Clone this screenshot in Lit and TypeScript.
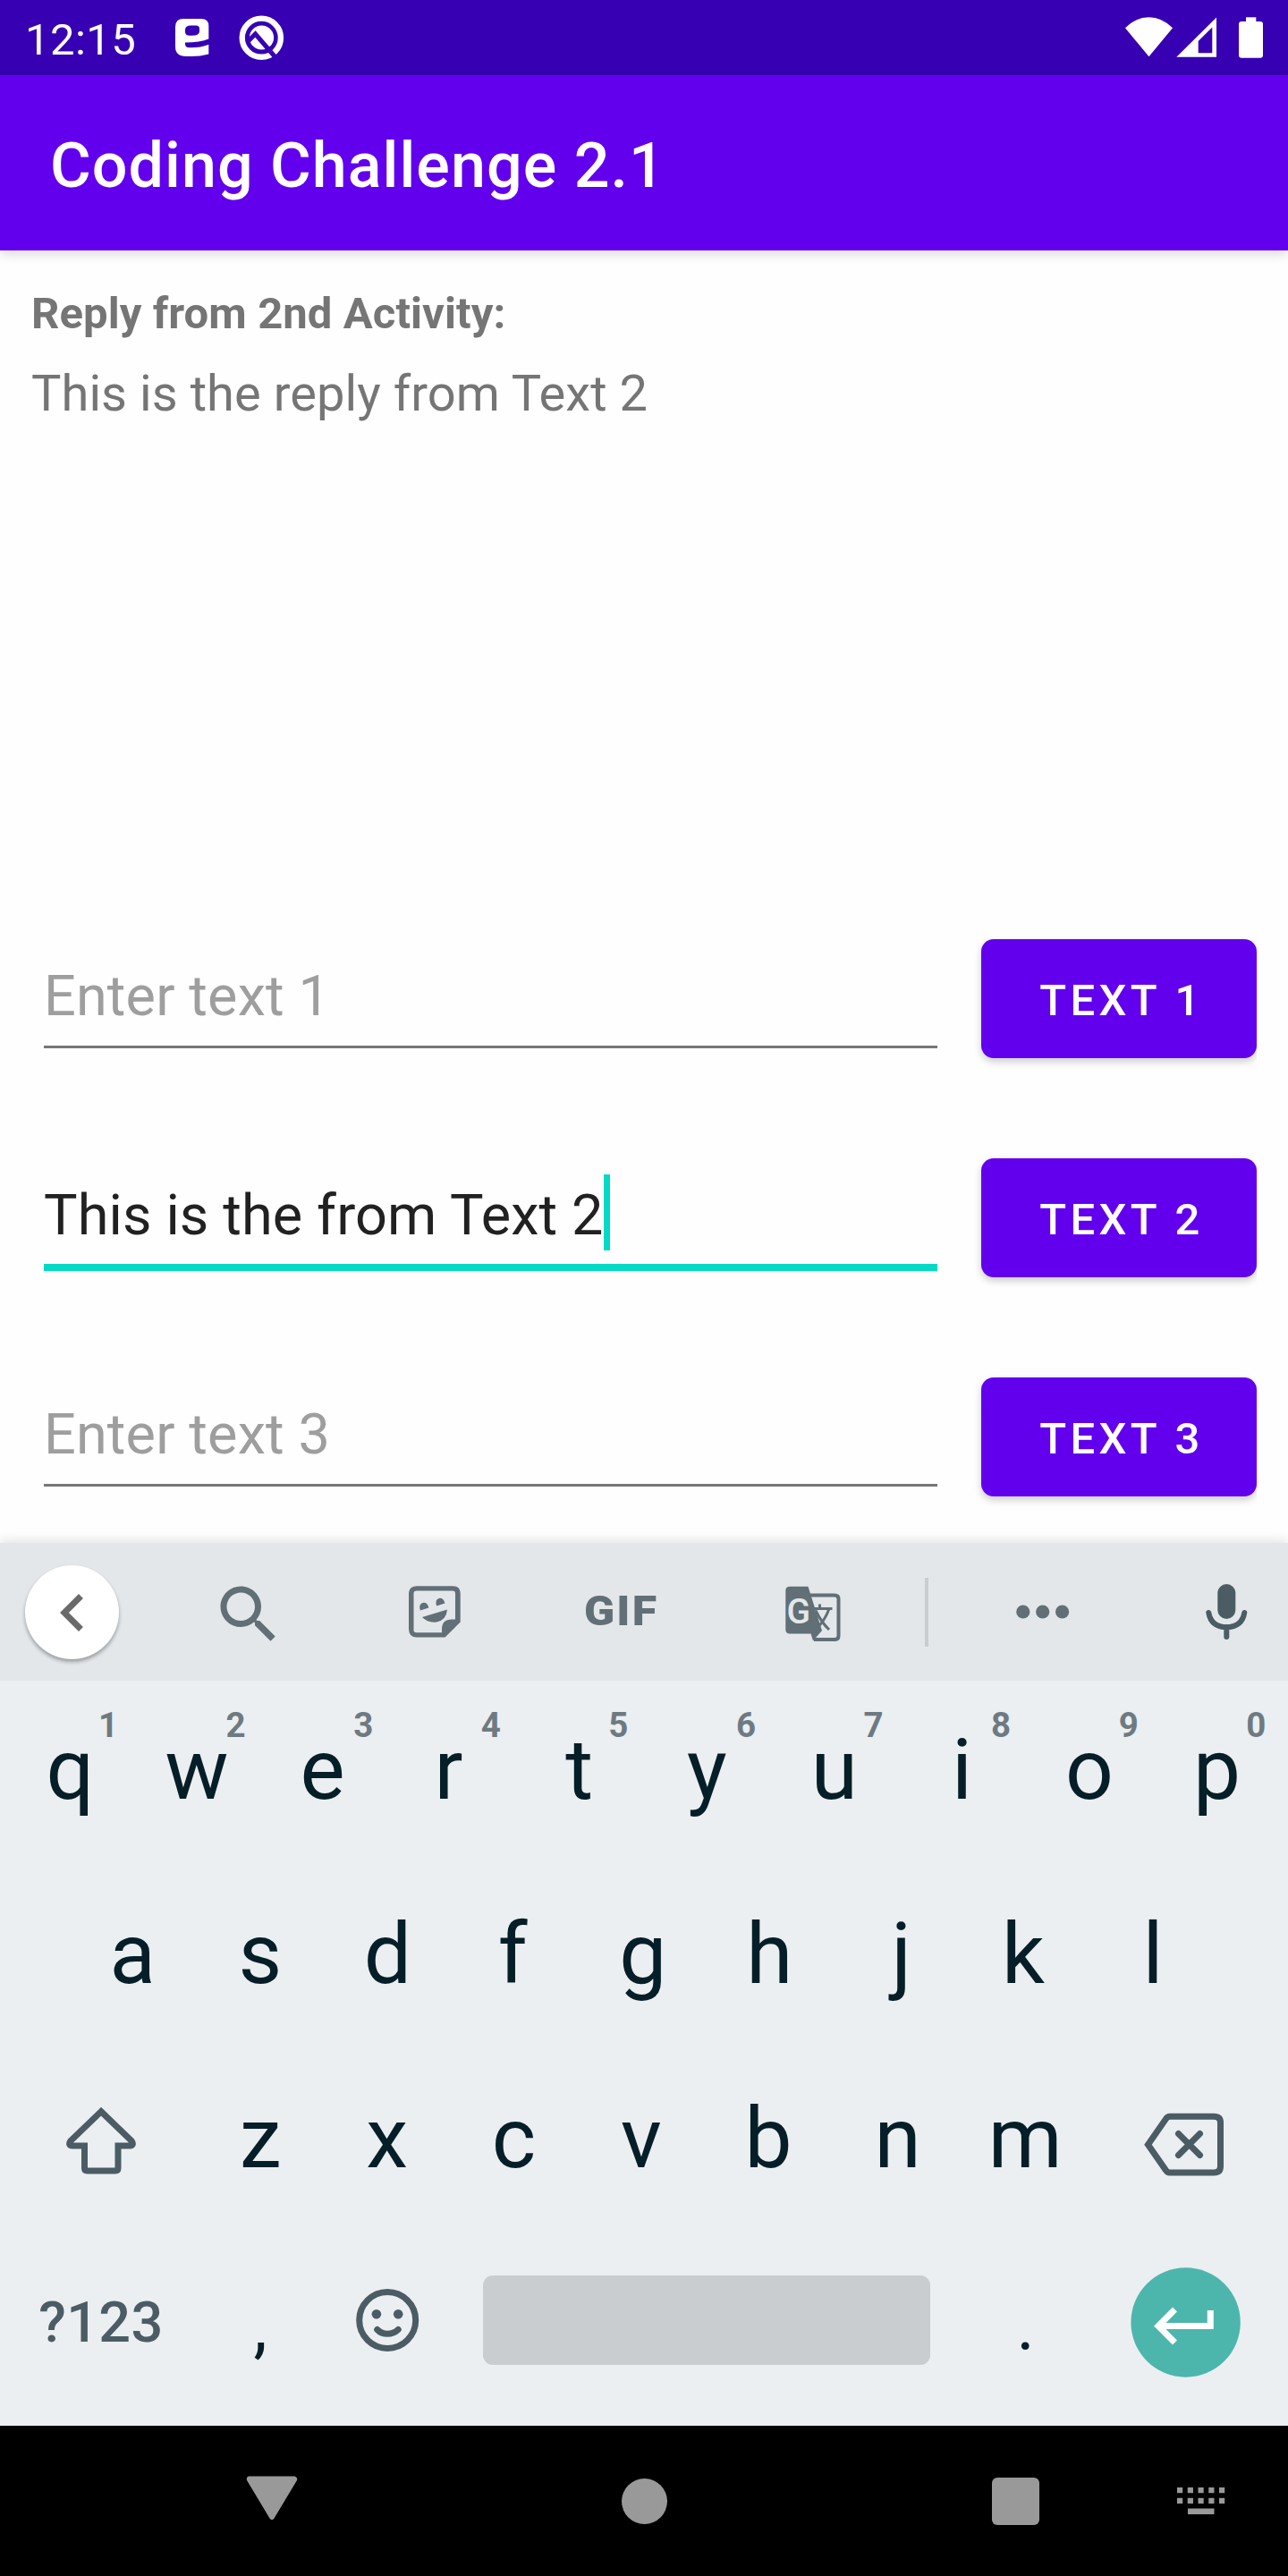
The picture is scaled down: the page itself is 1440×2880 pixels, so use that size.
import { LitElement, html, svg, css } from "lit";
import { customElement, property } from "lit/decorators.js";

@customElement("status-bar")
class StatusBar extends LitElement {
  static styles = css`
    :host { display: flex; height: 84px; background: #3700b3; color: #fff; padding-left: 28px; box-sizing: border-box; }
    svg { display: block; flex: none; }
    .time { width: 160px; font-size: 49px; line-height: 89px; white-space: nowrap; letter-spacing: 0.45px; }
    .notif { width: 140px; height: 84px; }
    .system { width: 190px; height: 84px; margin-left: auto; }
  `;
  render() {
    return html`
      <span class="time">12:15</span>
      <svg class="notif" viewBox="188 0 140 84">
        <path fill="#fff" fill-rule="evenodd" d="M205 21H225Q233.300 21 233.300 29V43.500Q224 47.500 207 47.500V49.500Q207 53.200 212 53.200Q225 53.200 233.300 49.700V60.500Q224 63 214 63H208Q196 63 196 52V30Q196 21 205 21ZM213.500 28.500Q207 28.500 207 33.500V35.500Q207 39.700 212 39.700H215Q223 39.700 223 35V32Q223 28.500 219 28.500Z"/>
        <circle cx="292.300" cy="42.200" r="21.600" fill="none" stroke="#fff" stroke-width="6.400"/>
        <circle cx="292.500" cy="42" r="13.600" fill="#fff"/>
        <path d="M276 47.500L285.500 38L310 66.500" fill="none" stroke="#3700b3" stroke-width="5"/>
      </svg>
      <svg class="system" viewBox="1250 0 190 84" fill="#fff">
        <path d="M1284.500 63.300L1258 31.300Q1270 19.300 1284.500 19.300T1311 31.300Z"/>
        <path fill-rule="evenodd" d="M1315.300 63.700L1360 19.500V63.700ZM1339.700 46V59.300H1355.300V30.500Z"/>
        <rect x="1385" y="24" width="27" height="40.700" rx="3"/>
        <rect x="1393" y="19.300" width="11.300" height="6"/>
      </svg>
    `;
  }
}

@customElement("entry-row")
class EntryRow extends LitElement {
  @property() hint = "";
  @property() value = "";
  @property() label = "";
  @property({ type: Boolean }) active = false;

  static styles = css`
    :host { display: flex; height: 133px; justify-content: space-between; }
    .field { width: 999px; height: 122px; box-sizing: border-box; border-bottom: 3.5px solid #777; display: flex; font-size: 63px; line-height: 127px; color: #9e9e9e; white-space: nowrap; letter-spacing: 0.13px; }
    .field.active { height: 126px; border-bottom: 8px solid #03dac5; color: #212121; }
    .caret { width: 7px; height: 85px; margin-top: 18px; background: #03dac5; }
    .button { width: 308px; height: 133px; box-sizing: border-box; padding: 0 0 0 6px; border: 0; border-radius: 14px; background: #6200ee; color: #fff; font: 500 49px/137px Roboto, sans-serif; letter-spacing: 4.37px; text-align: center; box-shadow: 0 4px 8px rgba(0, 0, 0, 0.2); clip-path: inset(-20px 0 -20px -20px); white-space: nowrap; }
  `;
  render() {
    return html`
      <div class="field ${this.active ? "active" : ""}">
        <span>${this.value || this.hint}</span>${this.active ? html`<span class="caret"></span>` : ""}
      </div>
      <div class="button" role="button">${this.label}</div>
    `;
  }
}

@customElement("suggestion-bar")
class SuggestionBar extends LitElement {
  static styles = css`
    :host { display: flex; align-items: center; height: 154px; background: #e3e7ea; color: #616f76; box-sizing: border-box; padding-left: 28px; }
    svg { display: block; flex: none; fill: currentColor; }
    .back { width: 105px; height: 105px; border-radius: 50%; background: #fff; box-shadow: 0 3px 4px rgba(0, 0, 0, 0.32); color: #6a6a6a; }
    .search { width: 84px; height: 84px; margin: 5px 0 0 103px; }
    .sticker { width: 60px; height: 60px; margin-left: 136px; }
    .gif { width: 92px; margin: 0 0 2px 137px; font-size: 46px; line-height: 60px; font-weight: 900; letter-spacing: 2px; transform: scaleX(1.09); transform-origin: left; }
    .translate { width: 64px; height: 64px; margin: 4px 0 0 132px; }
    .divider { width: 4px; height: 77px; margin-left: 93px; background: #c9cdd0; }
    .more { width: 60px; height: 16px; margin-left: 98px; }
    .mic { width: 50px; height: 66px; margin-left: 150px; color: #4b5c64; }
    .glyph { font: 500 39px "Roboto", sans-serif; fill: #e3e7ea; }
  `;
  render() {
    return html`
      <svg class="back" viewBox="-3.150 -3.150 30 30"><path d="M15.410 7.410L14 6l-6 6 6 6 1.410-1.410L10.830 12z"/></svg>
      <svg class="search" viewBox="0 0 24 24"><path d="M15.500 14h-.790l-.280-.270C15.410 12.590 16 11.110 16 9.500 16 5.910 13.090 3 9.500 3S3 5.910 3 9.500 5.910 16 9.500 16c1.610 0 3.090-.590 4.230-1.570l.270.280v.790l5 4.990L20.490 19l-4.990-5zm-6 0C7.010 14 5 11.990 5 9.500S7.010 5 9.500 5 14 7.010 14 9.500 11.990 14 9.500 14z"/></svg>
      <svg class="sticker" viewBox="456 1771.500 60 60">
        <path fill-rule="evenodd" d="M466 1772.700H506Q514.700 1772.700 514.700 1781.500V1813L497.500 1830H466Q457 1830 457 1821V1781.500Q457 1772.700 466 1772.700ZM465.500 1778Q462.500 1778 462.500 1781V1822Q462.500 1824.700 465.500 1824.700H494V1821Q494 1810 505 1810H509V1781Q509 1778 506 1778Z"/>
        <path d="M469.800 1800Q467.500 1792.500 473.500 1791.300Q478 1791 479.300 1797ZM488 1795Q485.800 1787.500 491.500 1786.300Q496 1786 497.400 1792ZM472 1807.500L500 1799Q499 1811 488 1813Q478 1814 472 1807.500Z"/>
      </svg>
      <span class="gif">GIF</span>
      <svg class="translate" viewBox="878 1771.500 64 64">
        <path d="M906 1783H934Q938.500 1783 938.500 1787V1828.500Q938.500 1832.500 934 1832.500H911" fill="none" stroke="currentColor" stroke-width="4"/>
        <path d="M884 1773.300H904.500L920 1822.500L910 1834L907.500 1826H884Q879.300 1826 879.300 1821V1778Q879.300 1773.300 884 1773.300Z"/>
        <text class="glyph" x="880.500" y="1814.500">G</text>
        <path fill="#e3e7ea" d="M912.500 1800L918.500 1813L925 1800Z"/>
        <path d="M908 1798H931.500M917.500 1793V1798M928 1798Q923.500 1811 914 1820M913 1800Q919 1813 928 1821.500" fill="none" stroke="currentColor" stroke-width="3"/>
      </svg>
      <span class="divider"></span>
      <svg class="more" viewBox="1136 0 60 16"><circle cx="1143.800" cy="8" r="7.600"/><circle cx="1165.700" cy="8" r="7.600"/><circle cx="1187.600" cy="8" r="7.600"/></svg>
      <svg class="mic" viewBox="1346 1768 50 66">
        <rect x="1361.300" y="1770" width="20" height="39" rx="10"/>
        <path d="M1351.300 1802Q1354 1818 1371.300 1818.300Q1388.500 1818 1391.300 1802M1371.300 1818V1829" fill="none" stroke="currentColor" stroke-width="6" stroke-linecap="round"/>
      </svg>
    `;
  }
}

// Optical shift of single letters inside their key, in pixels.
const OPTICAL: Record<string, number> = { q: 1, e: -2, r: -3.5, f: -3, j: 4, k: -2.5, h: -1, x: -1, c: -2, v: -2, b: -2.5, n: -0.5, m: -0.5 };

@customElement("soft-keyboard")
class SoftKeyboard extends LitElement {
  static styles = css`
    :host { display: block; height: 987px; background: #ebeff2; color: #051e27; box-shadow: 0 -2px 12px rgba(0, 0, 0, 0.12); }
    .row { display: flex; height: 206px; padding-left: 6px; box-sizing: border-box; align-items: flex-start; }
    .row.second { padding-left: 77px; }
    .key { position: relative; width: 142.600px; height: 206px; flex: none; text-align: center; font-size: 94.500px; line-height: 199px; }
    .num { position: absolute; left: 94px; top: 20px; width: 42px; font-size: 38.500px; line-height: 60px; font-weight: 700; color: #6e7a81; text-indent: 0; }
    .wide { width: 213.900px; height: 206px; flex: none; }
    .punct { font-size: 77px; line-height: 209px; }
    .mode { font-size: 63px; line-height: 199px; font-weight: 500; color: #4b5c64; text-align: center; letter-spacing: 0.3px; }
    .space { width: 500px; height: 100px; margin: 47px 35.200px 0 35px; border-radius: 11px; background: #c9cdd0; flex: none; }
    svg { display: block; }
    .icon { color: #4b5c64; fill: none; stroke: currentColor; stroke-width: 7; }
    .dot { fill: currentColor; stroke: none; }
  `;
  private keys(letters: string, numbers = "") {
    return [...letters].map(
      (c, i) => html`<div class="key" style="text-indent:${2 * (OPTICAL[c] ?? 0)}px">${c}${numbers ? html`<span class="num">${numbers[i]}</span>` : ""}</div>`
    );
  }
  render() {
    return html`
      <suggestion-bar></suggestion-bar>
      <div class="row">${this.keys("qwertyuiop", "1234567890")}</div>
      <div class="row second">${this.keys("asdfghjkl")}</div>
      <div class="row">
        <svg class="wide icon" viewBox="6 2291 213.900 206">
          <path stroke-linejoin="miter" d="M113 2360.700L79 2393.500Q75.500 2399 81 2399H94.500V2424Q94.500 2427 97.500 2427H129Q132 2427 132 2424V2399H145Q150.500 2399 147 2393.500Z"/>
        </svg>
        ${this.keys("zxcvbnm")}
        <svg class="wide icon" viewBox="1218 2291 213.900 206">
          <path d="M1308 2366.300H1357Q1364.500 2366.300 1364.500 2373V2422Q1364.500 2429 1357 2429H1308Q1305 2429 1303.500 2426.500L1283.500 2397.700L1303.500 2369Q1305 2366.300 1308 2366.300Z"/>
          <path stroke-linecap="round" d="M1317.500 2385.500L1341.500 2409.500M1341.500 2385.500L1317.500 2409.500"/>
        </svg>
      </div>
      <div class="row">
        <div class="wide mode">?123</div>
        <div class="key punct">,</div>
        <svg class="key icon" viewBox="361.800 2497 142.600 206">
          <circle cx="433" cy="2594" r="31.500"/>
          <circle class="dot" cx="420.700" cy="2587.300" r="5.300"/><circle class="dot" cx="445" cy="2587.300" r="5.300"/>
          <path stroke-linecap="round" d="M421.500 2604.500Q426 2609.300 433 2609.300T445 2604.500"/>
        </svg>
        <div class="space"></div>
        <div class="key punct">.</div>
        <svg class="wide" viewBox="1218 2497 213.900 206">
          <circle cx="1325.600" cy="2596.500" r="61.200" fill="#4db6ac"/>
          <path d="M1353.300 2583V2600.500H1296M1313.500 2582L1295 2600.500L1313.500 2619" fill="none" stroke="#fff" stroke-width="7"/>
        </svg>
      </div>
    `;
  }
}

@customElement("nav-bar")
class NavBar extends LitElement {
  static styles = css`
    :host { display: flex; align-items: center; height: 168px; background: #000; padding-left: 275px; box-sizing: border-box; }
    svg { display: block; fill: #999; flex: none; }
    .back { width: 58px; height: 50px; margin-top: -7px; }
    .home { width: 51px; height: 51px; margin-left: 361.500px; border-radius: 50%; background: #999; }
    .recent { width: 53px; height: 53px; margin-left: 363px; border-radius: 6px; background: #999; }
    .keyboard { width: 54px; height: 30px; margin-left: 154.500px; }
  `;
  render() {
    const xs = [0, 11.75, 23.5, 35.25, 47];
    return html`
      <svg class="back" viewBox="0 0 58 50"><path d="M3 .5H54.500Q58 1.500 57 5L31.500 47.500Q29 51 26.500 47.500L1 5Q0 1.500 3 .5Z"/></svg>
      <div class="home"></div>
      <div class="recent"></div>
      <svg class="keyboard" viewBox="0 0 54 30">
        ${xs.map((x) => svg`<rect x=${x} y="0" width="6.200" height="6.200"/><rect x=${x} y="11.800" width="6.200" height="6.200"/>`)}
        <rect x="12" y="23.500" width="29.500" height="6.500"/>
      </svg>
    `;
  }
}

@customElement("app-root")
class AppRoot extends LitElement {
  static styles = css`
    :host { display: flex; flex-direction: column; width: 1440px; height: 2880px; overflow: hidden; background: #fefefe; font-family: Roboto, sans-serif; }
    .appbar { height: 196px; flex: none; box-sizing: border-box; padding-left: 56px; background: #6200ee; color: #fff; font-size: 70px; line-height: 202px; font-weight: 500; letter-spacing: 1.050px; box-shadow: 0 4px 12px rgba(0, 0, 0, 0.15); white-space: nowrap; }
    .content { height: 1445px; flex: none; box-sizing: border-box; padding: 36px 35px 0; color: #757575; }
    .label { font-size: 49px; line-height: 70px; font-weight: 700; letter-spacing: 0.080px; }
    .reply { font-size: 56px; line-height: 80px; margin-top: 13.500px; height: 80px; letter-spacing: 0.070px; }
    .form { display: flex; flex-direction: column; gap: 112px; margin-top: 570.500px; padding-left: 14px; }
  `;
  render() {
    return html`
      <status-bar></status-bar>
      <div class="appbar">Coding Challenge 2.1</div>
      <div class="content">
        <div class="label">Reply from 2nd Activity:</div>
        <div class="reply">This is the reply from Text 2</div>
        <div class="form">
          <entry-row hint="Enter text 1" label="TEXT 1"></entry-row>
          <entry-row value="This is the from Text 2" label="TEXT 2" active></entry-row>
          <entry-row hint="Enter text 3" label="TEXT 3"></entry-row>
        </div>
      </div>
      <soft-keyboard></soft-keyboard>
      <nav-bar></nav-bar>
    `;
  }
}
